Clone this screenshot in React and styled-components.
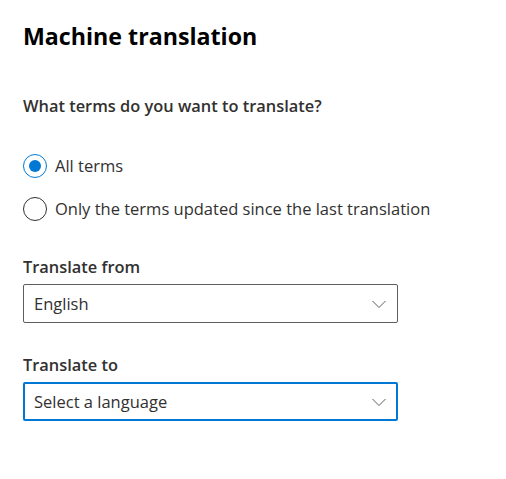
import React, { useState } from "react";
import styled, { createGlobalStyle } from "styled-components";

const GlobalStyle = createGlobalStyle`
  html, body {
    margin: 0;
    padding: 0;
    background: #ffffff;
  }
  body {
    font-family: "Open Sans", "Noto Sans", sans-serif;
    color: #323130;
  }
`;

const Panel = styled.section`
  width: 506px;
  height: 479px;
  box-sizing: border-box;
  padding: 20px 23px 0 23px;
  display: flex;
  flex-direction: column;
`;

const Title = styled.h1`
  margin: 0;
  font-size: 23.2px;
  font-weight: 700;
  line-height: 32px;
  color: #000000;
`;

const Question = styled.h2`
  margin: 44px 0 0 0;
  font-size: 16.4px;
  font-weight: 600;
  line-height: 20px;
  color: #323130;
`;

const RadioGroup = styled.div`
  display: flex;
  flex-direction: column;
  gap: 19px;
  margin-top: 38px;
`;

const RadioRow = styled.label`
  display: flex;
  align-items: center;
  gap: 8px;
  font-size: 16.5px;
  line-height: 24px;
  color: #323130;
  cursor: pointer;
`;

const RadioCircle = styled.span`
  width: 24px;
  height: 24px;
  box-sizing: border-box;
  border-radius: 50%;
  border: 1px solid ${(p) => (p.checked ? "#0078d4" : "#323130")};
  display: flex;
  align-items: center;
  justify-content: center;
  flex-shrink: 0;

  &::after {
    content: "";
    width: 12px;
    height: 12px;
    border-radius: 50%;
    background: #0078d4;
    display: ${(p) => (p.checked ? "block" : "none")};
  }
`;

const Field = styled.div`
  display: flex;
  flex-direction: column;
  gap: 6px;
  margin-top: ${(p) => p.top}px;
`;

const Label = styled.span`
  font-size: 16.4px;
  font-weight: 600;
  line-height: 22px;
  color: #323130;
`;

const Dropdown = styled.div`
  width: 375px;
  height: 39px;
  box-sizing: border-box;
  border: ${(p) => (p.focused ? "2px solid #0078d4" : "1px solid #605e5c")};
  border-radius: 2px;
  display: flex;
  align-items: center;
  justify-content: space-between;
  padding: 0 ${(p) => (p.focused ? 9 : 10)}px;
  font-size: 16.5px;
  color: #323130;
`;

const Chevron = () => (
  <svg width="16" height="16" viewBox="0 0 16 16" fill="none">
    <path d="M1.5 5 L8 11.5 L14.5 5" stroke="#605e5c" strokeWidth="1" />
  </svg>
);

export default function App() {
  const [choice, setChoice] = useState("all");
  return (
    <>
      <GlobalStyle />
      <Panel>
        <Title>Machine translation</Title>
        <Question>What terms do you want to translate?</Question>
        <RadioGroup>
          <RadioRow onClick={() => setChoice("all")}>
            <RadioCircle checked={choice === "all"} />
            All terms
          </RadioRow>
          <RadioRow onClick={() => setChoice("updated")}>
            <RadioCircle checked={choice === "updated"} />
            Only the terms updated since the last translation
          </RadioRow>
        </RadioGroup>
        <Field top={35}>
          <Label>Translate from</Label>
          <Dropdown>
            English
            <Chevron />
          </Dropdown>
        </Field>
        <Field top={31}>
          <Label>Translate to</Label>
          <Dropdown focused>
            Select a language
            <Chevron />
          </Dropdown>
        </Field>
      </Panel>
    </>
  );
}
